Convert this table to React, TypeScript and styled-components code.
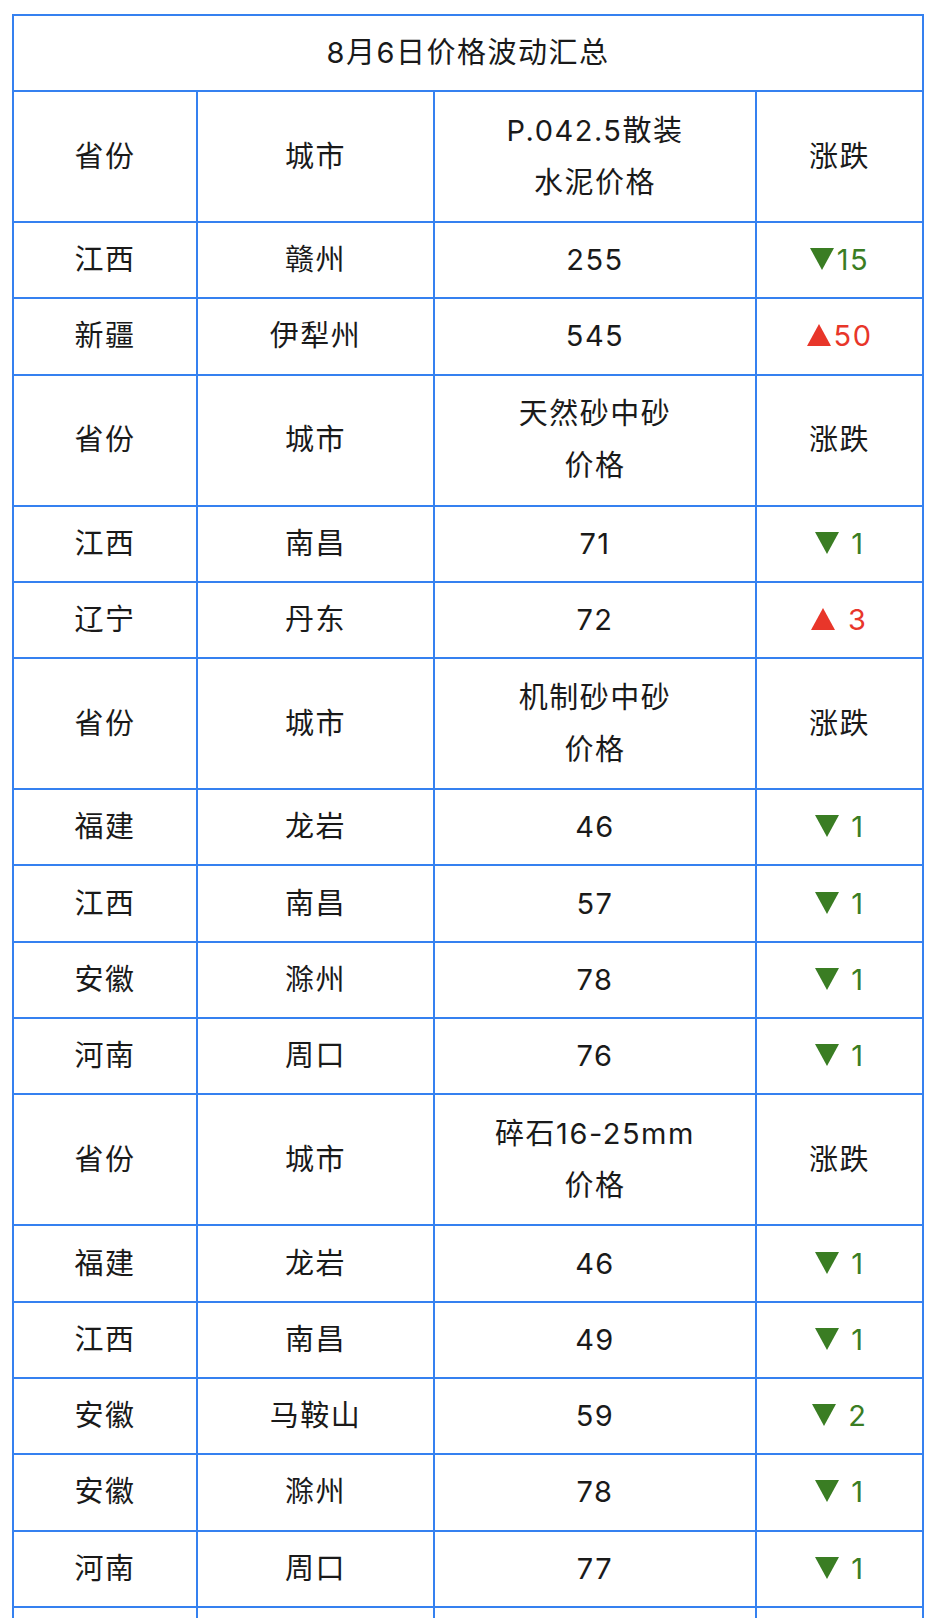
import React from 'react'
import styled, { createGlobalStyle } from 'styled-components'

const GlobalStyle = createGlobalStyle`
    body {
        margin: 0;
        background: #ffffff;
        font-family: "Inter", "Noto Sans CJK SC", sans-serif;
        color: #1a1a1a;
    }
`

type Trend = 'up' | 'down'

interface Row {
    province: string
    city: string
    price: string
    trend: Trend
    change: string
}

interface Section {
    title: React.ReactNode
    rows: Row[]
}

const sections: Section[] = [
    {
        title: <>P.042.5散装<br />水泥价格</>,
        rows: [
            { province: '江西', city: '赣州', price: '255', trend: 'down', change: '15' },
            { province: '新疆', city: '伊犁州', price: '545', trend: 'up', change: '50' },
        ],
    },
    {
        title: <>天然砂中砂<br />价格</>,
        rows: [
            { province: '江西', city: '南昌', price: '71', trend: 'down', change: ' 1' },
            { province: '辽宁', city: '丹东', price: '72', trend: 'up', change: ' 3' },
        ],
    },
    {
        title: <>机制砂中砂<br />价格</>,
        rows: [
            { province: '福建', city: '龙岩', price: '46', trend: 'down', change: ' 1' },
            { province: '江西', city: '南昌', price: '57', trend: 'down', change: ' 1' },
            { province: '安徽', city: '滁州', price: '78', trend: 'down', change: ' 1' },
            { province: '河南', city: '周口', price: '76', trend: 'down', change: ' 1' },
        ],
    },
    {
        title: <>碎石16-25mm<br />价格</>,
        rows: [
            { province: '福建', city: '龙岩', price: '46', trend: 'down', change: ' 1' },
            { province: '江西', city: '南昌', price: '49', trend: 'down', change: ' 1' },
            { province: '安徽', city: '马鞍山', price: '59', trend: 'down', change: ' 2' },
            { province: '安徽', city: '滁州', price: '78', trend: 'down', change: ' 1' },
            { province: '河南', city: '周口', price: '77', trend: 'down', change: ' 1' },
        ],
    },
]

const Triangle = ({ trend }: { trend: Trend }) => (
    <ArrowIcon viewBox="0 0 24 22" aria-hidden="true">
        {trend === 'up'
            ? <polygon points="12,0 24,22 0,22" fill="currentColor" />
            : <polygon points="0,0 24,0 12,22" fill="currentColor" />}
    </ArrowIcon>
)

export default function App() {
    return (
        <Page>
            <GlobalStyle />
            <Table>
                <colgroup>
                    <col style={{ width: '184px' }} />
                    <col style={{ width: '237px' }} />
                    <col style={{ width: '322px' }} />
                    <col style={{ width: '167px' }} />
                </colgroup>
                <tbody>
                    <tr>
                        <TitleCell colSpan={4}>8月6日价格波动汇总</TitleCell>
                    </tr>
                    {sections.map((section, i) => (
                        <React.Fragment key={i}>
                            <tr>
                                <HeadCell>省份</HeadCell>
                                <HeadCell>城市</HeadCell>
                                <HeadCell>{section.title}</HeadCell>
                                <HeadCell>涨跌</HeadCell>
                            </tr>
                            {section.rows.map((row, j) => (
                                <tr key={j}>
                                    <Cell>{row.province}</Cell>
                                    <Cell>{row.city}</Cell>
                                    <Cell>{row.price}</Cell>
                                    <Cell>
                                        <Change $trend={row.trend}>
                                            <Triangle trend={row.trend} />
                                            {row.change}
                                        </Change>
                                    </Cell>
                                </tr>
                            ))}
                        </React.Fragment>
                    ))}
                    <tr>
                        <Cell />
                        <Cell />
                        <Cell />
                        <Cell />
                    </tr>
                </tbody>
            </Table>
        </Page>
    )
}

const Page = styled.div`
    padding: 14px 12px 0;
`
const Table = styled.table`
    width: 910px;
    table-layout: fixed;
    border-collapse: collapse;
    font-size: 29px;
`
const Cell = styled.td`
    height: 74.3px;
    padding: 0;
    border: 2px solid #3581f0;
    text-align: center;
    vertical-align: middle;
    line-height: 52px;
    letter-spacing: 1.5px;
`
const HeadCell = styled(Cell)`
    height: 129px;
`
const TitleCell = styled(Cell)`
    height: 74px;
`
const Change = styled.span<{ $trend: Trend }>`
    white-space: pre;
    color: ${props => props.$trend === 'up' ? '#e8362a' : '#3a7d23'};
`
const ArrowIcon = styled.svg`
    width: 24px;
    height: 22px;
    margin-right: 3px;
    vertical-align: baseline;
`
